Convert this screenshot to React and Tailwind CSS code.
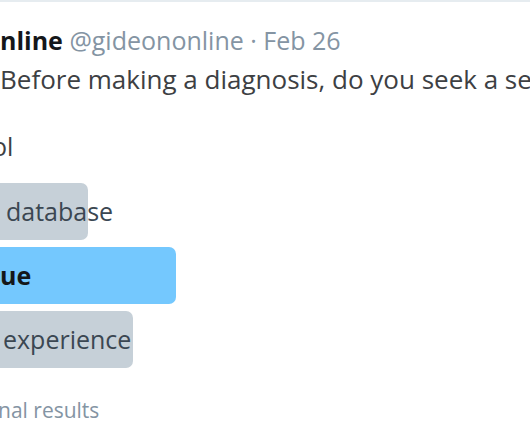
const OPTIONS = [
    { label: 'database', width: 88, bold: false, pad: 6 },
    { label: 'ue', width: 176, bold: true, pad: 0 },
    { label: 'experience', width: 133, bold: false, pad: 3 }
]

function PollOption({ option }) {
    return (
        <div className="relative h-[57px] flex items-center">
            <div
                className={`absolute left-0 top-0 h-full rounded-r-[7px] ${option.bold ? 'bg-[#74c8fe]' : 'bg-[#c6d0d8]'}`}
                style={{ width: option.width }}
            />
            <span
                className={`relative text-[25px] ${option.bold ? 'font-bold text-[#14171a]' : 'text-[#3b4752]'}`}
                style={{ paddingLeft: option.pad }}
            >
                {option.label}
            </span>
        </div>
    )
}

export default function App() {
    return (
        <div className="w-[530px] h-[442px] bg-white overflow-hidden border-t-2 border-[#e6ecf0] font-['Open_Sans',sans-serif]">
            <div className="pt-[21px] whitespace-nowrap">
                <div className="text-[25px] leading-[34px]">
                    <span className="font-bold text-[#14171a]">nline</span>
                    <span className="text-[#8494a3]"> @gideononline · Feb 26</span>
                </div>
                <div className="mt-[3px] text-[26px] leading-[38px] text-[#3d4043]">
                    Before making a diagnosis, do you seek a second opinion?
                </div>
                <div className="mt-[33px] text-[25px] leading-[30px] text-[#3d4043] -ml-[8px]">
                    ol
                </div>
            </div>

            <div className="mt-[22px] flex flex-col gap-[7px] w-[200px]">
                {OPTIONS.map((option) => (
                    <PollOption key={option.label} option={option} />
                ))}
            </div>

            <div className="mt-[27px] text-[21px] text-[#8494a3] -ml-[2px]">
                nal results
            </div>
        </div>
    )
}
